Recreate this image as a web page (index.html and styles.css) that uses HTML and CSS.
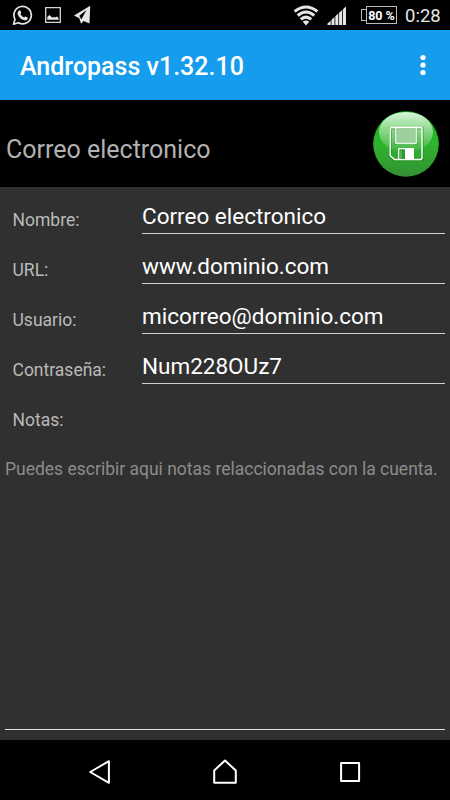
FILE: index.html
```html
<!DOCTYPE html>
<html lang="es">

<head>
  <meta charset="UTF-8" />
  <meta name="viewport" content="width=device-width, initial-scale=1" />
  <title>Andropass</title>
  <link rel="stylesheet" href="styles.css">
</head>

<body>

  <!-- Status bar -->
  <div class="status-bar">
    <svg class="icon-whatsapp" width="22" height="22" viewBox="0 0 22 22">
      <path d="M1.600 20.200 3 15.300A8.700 8.700 0 1 1 6.400 18.700Z" fill="none" stroke="#e6e6e6" stroke-width="1.700" stroke-linejoin="round" />
      <path d="M7.200 6.400c.5-.3 1-.2 1.200.3l.8 1.900c.1.4-.1.700-.8 1.500.8 1.600 2 2.700 3.700 3.400.7-.8 1-1.200 1.400-1l2 1c.5.300.4.600.2 1.200-.5 1.300-2 1.800-3.200 1.500-3.300-.8-5.700-3-6.800-5.800-.5-1.500.2-3.200 1.500-4Z" fill="#e6e6e6" />
    </svg>
    <svg class="icon-image" width="16" height="16" viewBox="0 0 16 16">
      <path d="M.700.700h14.600v14.600H.700z" fill="none" stroke="#d6d6d6" stroke-width="1.300" />
      <path d="M2.300 12.800V10L4.500 8 6.300 9.700 8 10.700 9 9.700 10.500 10.400 11.700 9.500 13.500 11V12.800Z" fill="#e6e6e6" />
    </svg>
    <svg class="icon-telegram" width="18" height="20" viewBox="0 0 18 20">
      <path d="M16.200.800 0 10.600 5.300 13.200 7 18.800 9.600 16 15.500 18.500Z" fill="#e6e6e6" />
      <path d="M12.500 5 5.300 10.800 7.300 14.500Z" fill="#000" />
    </svg>
    <div class="status-right">
      <svg class="icon-wifi" width="26" height="21" viewBox="0 0 26 21">
        <g fill="none" stroke="#e6e6e6" stroke-width="3">
          <path d="M1.600 6.500Q13-2.400 24.400 6.500" />
          <path d="M4.700 10.500Q13 3.500 21.300 10.500" />
          <path d="M7.800 14.400Q13 9.800 18.200 14.400" />
        </g>
        <path d="M9.700 16.700Q13 14.200 16.300 16.700L13 20.500Z" fill="#e6e6e6" />
      </svg>
      <svg class="icon-signal" width="20" height="20" viewBox="0 0 20 20">
        <path d="M.500 19V17.500L3.700 14.800V19ZM4.500 19V13.800L7.500 11V19ZM8.300 19V10.200L11.300 7.500V19ZM12.100 19V6.800L15.100 4.100V19ZM15.900 19V3.300L19 .500V19Z" fill="#e6e6e6" />
      </svg>
      <div class="battery"><span>80 %</span></div>
      <span class="clock">0:28</span>
    </div>
  </div>

  <!-- App bar -->
  <div class="app-bar">
    <h1>Andropass v1.32.10</h1>
    <svg class="icon-more" width="6" height="22" viewBox="0 0 6 22">
      <g fill="#fff">
        <circle cx="3" cy="3.500" r="2.600" />
        <circle cx="3" cy="11" r="2.600" />
        <circle cx="3" cy="18.500" r="2.600" />
      </g>
    </svg>
  </div>

  <!-- Entry title with save button -->
  <div class="entry-header">
    <h2>Correo electronico</h2>
    <svg class="save-btn" width="66" height="66" viewBox="0 0 66 66">
      <defs>
        <linearGradient id="ball" x1="0" y1="0" x2="0" y2="1">
          <stop offset="0" stop-color="#12b812" />
          <stop offset=".5" stop-color="#2fb42f" />
          <stop offset="1" stop-color="#339033" />
        </linearGradient>
        <linearGradient id="shine" x1="0" y1="0" x2="0" y2="1">
          <stop offset="0" stop-color="#fff" stop-opacity=".85" />
          <stop offset="1" stop-color="#fff" stop-opacity=".03" />
        </linearGradient>
      </defs>
      <circle cx="33" cy="33" r="32.800" fill="url(#ball)" />
      <ellipse cx="33" cy="21" rx="27" ry="20" fill="url(#shine)" />
      <g fill="none" stroke="#187a18" stroke-opacity=".35" stroke-width="3">
        <path d="M17.500 17.500H49.500V49H21.500L17.500 45Z" />
        <path d="M22.500 17.500V32.500H43.500V17.500" />
      </g>
      <path d="M22.500 17.500V32.500H43.500V17.500Z" fill="#9bcf9b" />
      <g fill="none" stroke="#fff" stroke-width="1.400" stroke-linejoin="round">
        <path d="M18.500 16.500H47.500a1.500 1.500 0 0 1 1.500 1.500V47a1.500 1.500 0 0 1-1.500 1.500H21.500L17.200 44.500V18a1.500 1.500 0 0 1 1.300-1.500Z" />
        <path d="M22.500 17V31a1.500 1.500 0 0 0 1.500 1.500H42a1.500 1.500 0 0 0 1.500-1.500V17" stroke-opacity=".8" />
        <path d="M25.800 48.500V37.800H40.500" />
      </g>
      <path d="M26.500 38.500H32V47.800H26.500Z" fill="#2c9a2c" />
      <path d="M28 39.500V47.800" stroke="#7cc07c" />
      <path d="M32 37.200H41V48.500H32Z" fill="#fff" />
    </svg>
  </div>

  <!-- Account form -->
  <form class="form">
    <div class="row">
      <label for="nombre">Nombre:</label>
      <input type="text" id="nombre" value="Correo electronico" spellcheck="false" />
    </div>
    <div class="row">
      <label for="url">URL:</label>
      <input type="text" id="url" value="www.dominio.com" spellcheck="false" />
    </div>
    <div class="row">
      <label for="usuario">Usuario:</label>
      <input type="text" id="usuario" value="micorreo@dominio.com" spellcheck="false" />
    </div>
    <div class="row">
      <label for="clave">Contraseña:</label>
      <input type="text" id="clave" value="Num228OUz7" spellcheck="false" />
    </div>
    <div class="row">
      <label for="notas">Notas:</label>
    </div>
    <textarea id="notas" placeholder="Puedes escribir aqui notas relaccionadas con la cuenta."></textarea>
  </form>

  <!-- Navigation bar -->
  <div class="nav-bar">
    <svg width="26" height="26" viewBox="0 0 26 26">
      <path d="M3.200 13 21.900 2.200V23.800Z" />
    </svg>
    <svg width="26" height="26" viewBox="0 0 26 26">
      <path d="M2.200 11.400 13 1.500 23.800 11.400V23.700H2.200Z" />
    </svg>
    <svg width="26" height="26" viewBox="0 0 26 26">
      <path d="M4.100 4.100H22.100V22.100H4.100Z" />
    </svg>
  </div>

</body>

</html>
```
FILE: styles.css
```css
* {
  box-sizing: border-box;
}

body {
  margin: 0;
  background: #000;
  color: #fff;
  font-family: Roboto, sans-serif;
  height: 100vh;
  overflow: hidden;
  display: flex;
  flex-direction: column;
}

svg {
  display: block;
  flex-shrink: 0;
}

/* Status bar */
.status-bar {
  height: 30px;
  flex-shrink: 0;
  display: flex;
  align-items: center;
  padding: 0 9px 0 12px;
}

.icon-image {
  margin-left: 11px;
}

.icon-telegram {
  margin-left: 13px;
}

.status-right {
  display: flex;
  align-items: center;
  margin-left: auto;
}

.icon-wifi {
  margin-top: 1px;
}

.icon-signal {
  margin-left: 8px;
  margin-top: 1px;
}

/* The terminal nub is on the left side */
.battery {
  display: flex;
  align-items: center;
  margin-left: 14px;
}

.battery::before {
  content: "";
  width: 4px;
  height: 10px;
  border: 1px solid #bbb;
  border-right: none;
}

.battery span {
  width: 31px;
  height: 18px;
  border: 1px solid #bbb;
  font-size: 12.5px;
  font-weight: 700;
  line-height: 17px;
  text-align: center;
  white-space: nowrap;
}

.clock {
  width: 36px;
  margin-left: 8px;
  font-size: 18.5px;
  line-height: 30px;
  padding-top: 1px;
  color: #e6e6e6;
}

/* App bar */
.app-bar {
  height: 70px;
  flex-shrink: 0;
  display: flex;
  align-items: center;
  justify-content: space-between;
  padding: 2px 24px 0 20px;
  background: #169ced;
  border-top: 1px solid #10a4f8;
}

.icon-more {
  margin-bottom: 3px;
}

h1 {
  margin: 0;
  font-size: 25px;
  font-weight: 500;
}

/* Entry title */
.entry-header {
  height: 87px;
  flex-shrink: 0;
  display: flex;
  align-items: flex-start;
  justify-content: space-between;
  padding: 11px 11px 0 6px;
}

h2 {
  margin: 25px 0 0;
  font-size: 25px;
  font-weight: 400;
  line-height: 28px;
  color: #b2b2b2;
}

/* Form */
.form {
  flex: 1;
  display: flex;
  flex-direction: column;
  padding: 7px 5px 10px;
  background: #303030;
}

.row {
  height: 50px;
  flex-shrink: 0;
  display: flex;
  align-items: flex-start;
}

label {
  width: 137px;
  padding-left: 7.5px;
  font-size: 17.5px;
  line-height: 52px;
  color: #bababa;
}

input {
  flex: 1;
  min-width: 0;
  height: 40px;
  padding: 5px 0 0;
  border: none;
  border-bottom: 1px solid #d0d0d0;
  background: transparent;
  font: 22.5px Roboto, sans-serif;
  color: #fff;
  outline: none;
}

textarea {
  flex: 1;
  margin: 0;
  padding: 14px 0 0;
  border: none;
  border-bottom: 1px solid #e0e0e0;
  background: transparent;
  font: 17.5px/22px Roboto, sans-serif;
  color: #fff;
  resize: none;
  outline: none;
}

textarea::placeholder {
  color: #8c8c8c;
}

/* Navigation bar */
.nav-bar {
  height: 60px;
  flex-shrink: 0;
  display: flex;
  align-items: center;
  justify-content: center;
  gap: 99px;
  padding-top: 3px;
  fill: none;
  stroke: #fff;
  stroke-width: 2;
  stroke-linejoin: round;
}
```
